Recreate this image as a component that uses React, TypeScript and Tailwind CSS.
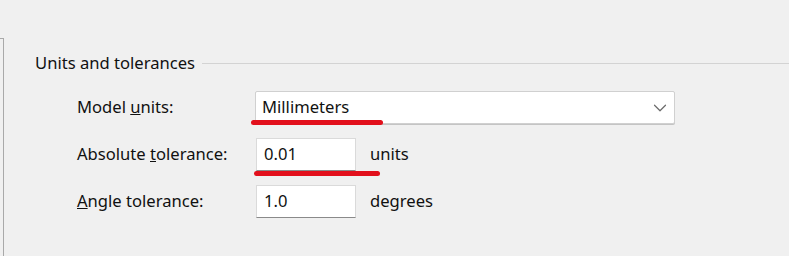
import { ChevronDown } from "lucide-react";

const font = { fontFamily: '"Noto Sans", "Open Sans", sans-serif' };

export default function App() {
  return (
    <div className="flex h-[256px] w-[789px] overflow-hidden bg-[#f0f0f0] pt-[38px] text-[16.6px] text-[#111]" style={font}>
      <div className="w-[4px] border-r border-t border-[#a9a9a9]" />
      <div className="flex-1 pl-[31px] pt-[15px]">
        <div className="flex h-[20px] items-center">
          <span className="leading-[20px]">Units and tolerances</span>
          <div className="ml-[7px] h-px flex-1 bg-[#d3d3d3]" />
        </div>

        <div className="mt-[18px] grid grid-cols-[178px_auto] items-center gap-y-[14px] pl-[42px]">
          <span>
            Model <u>u</u>nits:
          </span>
          <div className="relative">
            <div className="flex h-[33px] w-[420px] items-center justify-between rounded-[2px] border border-[#d0d0d0] bg-white pl-[6px] pr-[3px] shadow-[0_1px_0_#c4c4c4]">
              <span>Millimeters</span>
              <ChevronDown className="h-[22px] w-[22px] text-[#6a6a6a]" strokeWidth={1.3} />
            </div>
            <div className="absolute left-[-4px] top-[29px] h-[5px] w-[132px] rounded-full bg-[#e2101c]" />
          </div>

          <span>
            Absolute <u>t</u>olerance:
          </span>
          <div className="relative flex items-center">
            <div className="ml-[1px] flex h-[33px] w-[100px] items-center border border-[#dadada] border-b-[#8a8a8a] bg-white pl-[7px]">
              0.01
            </div>
            <span className="ml-[14px]">units</span>
            <div className="absolute left-[-1px] top-[33px] h-[5px] w-[126px] rounded-full bg-[#e2101c]" />
          </div>

          <span>
            <u>A</u>ngle tolerance:
          </span>
          <div className="flex items-center">
            <div className="ml-[1px] flex h-[33px] w-[100px] items-center border border-[#dadada] border-b-[#8a8a8a] bg-white pl-[7px]">
              1.0
            </div>
            <span className="ml-[14px]">degrees</span>
          </div>
        </div>
      </div>
    </div>
  );
}
